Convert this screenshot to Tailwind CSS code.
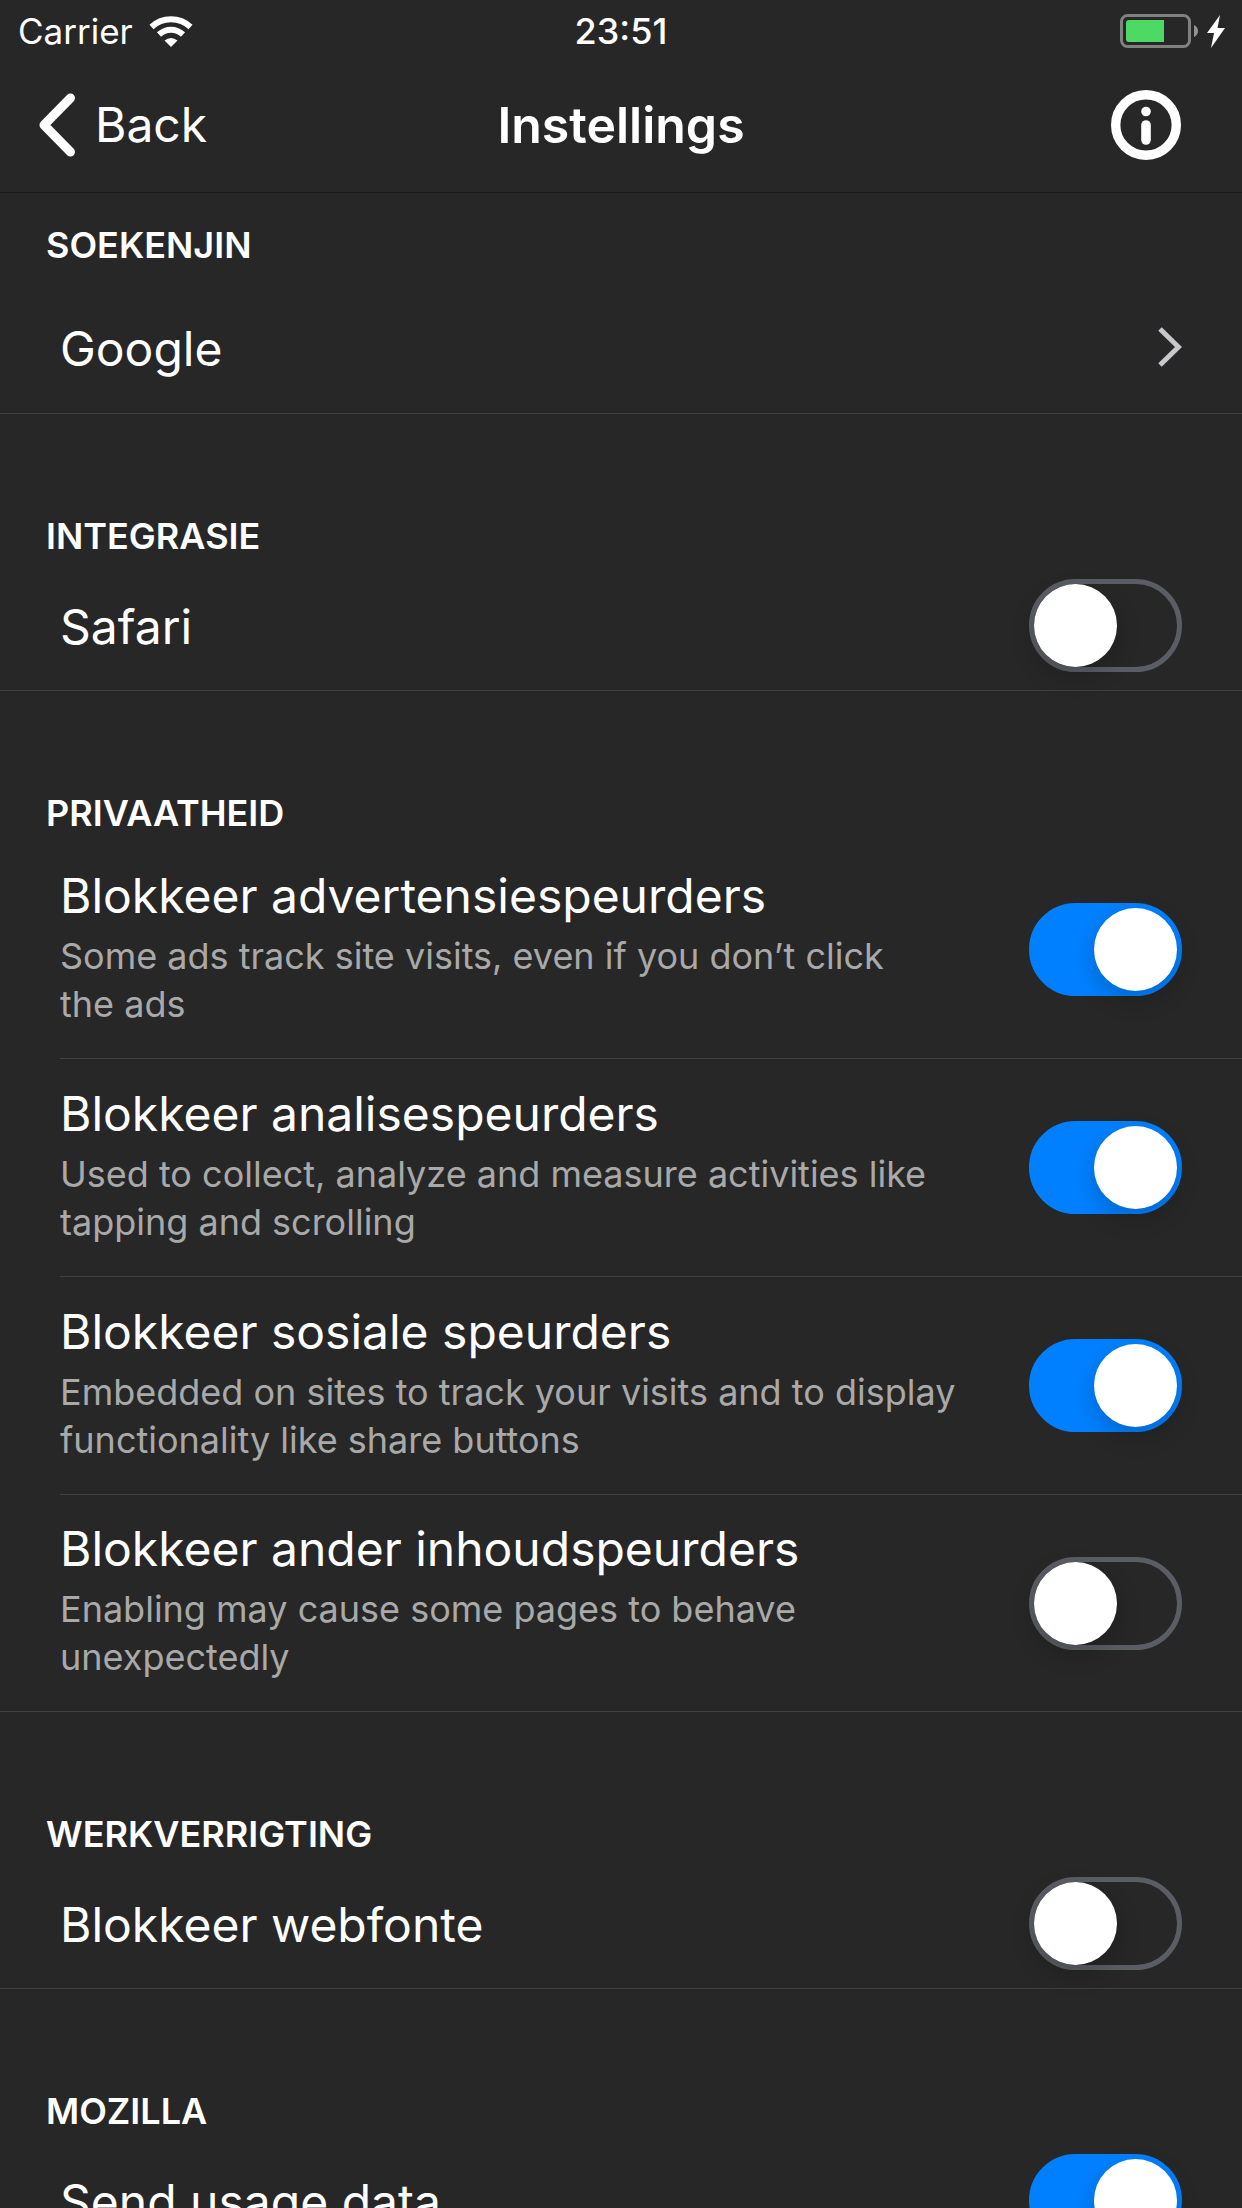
<!DOCTYPE html>
<html lang="af">
<head>
<meta charset="utf-8">
<meta name="viewport" content="width=device-width, initial-scale=1">
<title>Instellings</title>
<script src="https://cdn.jsdelivr.net/npm/@tailwindcss/browser@4"></script>
</head>
<body class="flex h-screen flex-col overflow-hidden bg-[#272727] font-['Inter',sans-serif] text-white">
<div class="grid h-[62px] shrink-0 grid-cols-[1fr_auto_1fr] items-center px-4 text-[36px] leading-[60px]">
  <div class="flex items-center gap-4 pl-0.5">
    <span class="text-[35px]">Carrier</span>
    <svg class="h-[31px] w-[44px]" viewBox="0 0 44 31" fill="none" stroke="#fff" aria-label="Wi-Fi">
      <path d="M2.500 11C13.500 .8 30.500 .8 41.500 11" stroke-width="6"/>
      <path d="M10 18.500C17 12 27 12 34 18.500" stroke-width="6"/>
      <path d="M22 31L15.500 24.500Q22 19.500 28.500 24.500Z" fill="#fff" stroke="none"/>
    </svg>
  </div>
  <time class="font-medium">23:51</time>
  <svg class="h-[34px] w-[106px] justify-self-end" viewBox="0 0 106 34" aria-label="Battery charging">
    <rect x="1.500" y="1.500" width="68" height="31" rx="6" fill="none" stroke="#808080" stroke-width="3"/>
    <path d="M9 6H44V28H9Q6 28 6 25V9Q6 6 9 6Z" fill="#4cd964"/>
    <path d="M74 11Q78 13 78 17T74 23Z" fill="#939393"/>
    <path d="M100 1L87 19H94L91 34L105 14H97.500Z" fill="#fff"/>
  </svg>
</div>

<header class="grid h-[131px] shrink-0 grid-cols-[1fr_auto_1fr] items-center border-b border-[#191919] px-[38px] pb-1 leading-[60px]">
  <button class="flex items-center gap-5 justify-self-start text-[48px]">
    <svg class="h-[64px] w-[37px]" viewBox="0 0 37 64" fill="none" stroke="#fff" stroke-width="9" stroke-linecap="round" stroke-linejoin="round"><path d="M32.500 5L6 32L32.500 59"/></svg>
    <span>Back</span>
  </button>
  <h1 class="text-[50px] font-semibold">Instellings</h1>
  <button class="mr-[23px] justify-self-end" aria-label="Info">
    <svg class="size-[70px]" viewBox="0 0 70 70"><circle cx="35" cy="35" r="30.300" fill="none" stroke="#fff" stroke-width="9.400"/><circle cx="35" cy="21.500" r="4.800" fill="#fff"/><path d="M35 35V50" stroke="#fff" stroke-width="9.600" stroke-linecap="round"/></svg>
  </button>
</header>

<main class="flex-1 overflow-y-auto text-[48px] leading-[60px] [scrollbar-width:none]">
  <section class="border-b border-[#404040]">
    <h2 class="flex h-20 items-end px-[46px] pb-1 text-[36px] leading-[48px] font-semibold">SOEKENJIN</h2>
    <a href="#" class="flex h-[140px] items-center justify-between px-[60px] pt-3">
      <span>Google</span>
      <svg class="mb-1 h-[40px] w-[24px]" viewBox="0 0 24 40" fill="none" stroke="#c7c7cc" stroke-width="5"><path d="M2 2L20.500 20L2 38"/></svg>
    </a>
  </section>

  <section class="border-b border-[#404040]">
    <h2 class="flex h-[150px] items-end px-[46px] pb-1 text-[36px] leading-[48px] font-semibold">INTEGRASIE</h2>
    <div class="flex h-[126px] items-center justify-between px-[60px]">
      <label for="safari">Safari</label>
      <input id="safari" type="checkbox" role="switch" class="mb-1 h-[93px] w-[153px] shrink-0 appearance-none rounded-full border-[5px] border-[#5a5e64] before:block before:size-[83px] before:rounded-full before:bg-white before:shadow-[0_9px_24px_rgba(0,0,0,0.2)] checked:border-[#0080ff] checked:bg-[#0080ff] checked:before:ml-[60px]">
    </div>
  </section>

  <section class="border-b border-[#404040]">
    <h2 class="flex h-[150px] items-end px-[46px] pb-1 text-[36px] leading-[48px] font-semibold">PRIVAATHEID</h2>
    <div class="ml-[60px] flex h-[218px] items-center justify-between border-b border-[#404040] pr-[60px]">
      <div class="flex flex-col gap-1.5 pb-1.5">
        <label for="ads">Blokkeer advertensiespeurders</label>
        <p class="text-[36px] leading-[48px] text-[#a9a9a9]">Some ads track site visits, even if you don’t click<br>the ads</p>
      </div>
      <input id="ads" type="checkbox" role="switch" checked class="h-[93px] w-[153px] shrink-0 appearance-none rounded-full border-[5px] border-[#5a5e64] before:block before:size-[83px] before:rounded-full before:bg-white before:shadow-[0_9px_24px_rgba(0,0,0,0.2)] checked:border-[#0080ff] checked:bg-[#0080ff] checked:before:ml-[60px]">
    </div>
    <div class="ml-[60px] flex h-[218px] items-center justify-between border-b border-[#404040] pr-[60px]">
      <div class="flex flex-col gap-1.5 pb-1.5">
        <label for="analytics">Blokkeer analisespeurders</label>
        <p class="text-[36px] leading-[48px] text-[#a9a9a9]">Used to collect, analyze and measure activities like<br>tapping and scrolling</p>
      </div>
      <input id="analytics" type="checkbox" role="switch" checked class="h-[93px] w-[153px] shrink-0 appearance-none rounded-full border-[5px] border-[#5a5e64] before:block before:size-[83px] before:rounded-full before:bg-white before:shadow-[0_9px_24px_rgba(0,0,0,0.2)] checked:border-[#0080ff] checked:bg-[#0080ff] checked:before:ml-[60px]">
    </div>
    <div class="ml-[60px] flex h-[218px] items-center justify-between border-b border-[#404040] pr-[60px]">
      <div class="flex flex-col gap-1.5 pb-1.5">
        <label for="social">Blokkeer sosiale speurders</label>
        <p class="text-[36px] leading-[48px] text-[#a9a9a9]">Embedded on sites to track your visits and to display<br>functionality like share buttons</p>
      </div>
      <input id="social" type="checkbox" role="switch" checked class="h-[93px] w-[153px] shrink-0 appearance-none rounded-full border-[5px] border-[#5a5e64] before:block before:size-[83px] before:rounded-full before:bg-white before:shadow-[0_9px_24px_rgba(0,0,0,0.2)] checked:border-[#0080ff] checked:bg-[#0080ff] checked:before:ml-[60px]">
    </div>
    <div class="ml-[60px] flex h-[216px] items-center justify-between pr-[60px]">
      <div class="flex flex-col gap-1.5 pb-1.5">
        <label for="content">Blokkeer ander inhoudspeurders</label>
        <p class="text-[36px] leading-[48px] text-[#a9a9a9]">Enabling may cause some pages to behave<br>unexpectedly</p>
      </div>
      <input id="content" type="checkbox" role="switch" class="h-[93px] w-[153px] shrink-0 appearance-none rounded-full border-[5px] border-[#5a5e64] before:block before:size-[83px] before:rounded-full before:bg-white before:shadow-[0_9px_24px_rgba(0,0,0,0.2)] checked:border-[#0080ff] checked:bg-[#0080ff] checked:before:ml-[60px]">
    </div>
  </section>

  <section class="border-b border-[#404040]">
    <h2 class="flex h-[150px] items-end px-[46px] pb-1 text-[36px] leading-[48px] font-semibold">WERKVERRIGTING</h2>
    <div class="flex h-[126px] items-center justify-between px-[60px]">
      <label for="fonts">Blokkeer webfonte</label>
      <input id="fonts" type="checkbox" role="switch" class="mb-1 h-[93px] w-[153px] shrink-0 appearance-none rounded-full border-[5px] border-[#5a5e64] before:block before:size-[83px] before:rounded-full before:bg-white before:shadow-[0_9px_24px_rgba(0,0,0,0.2)] checked:border-[#0080ff] checked:bg-[#0080ff] checked:before:ml-[60px]">
    </div>
  </section>

  <section class="border-b border-[#404040]">
    <h2 class="flex h-[150px] items-end px-[46px] pb-1 text-[36px] leading-[48px] font-semibold">MOZILLA</h2>
    <div class="flex h-[126px] items-center justify-between px-[60px]">
      <label for="usage">Send usage data</label>
      <input id="usage" type="checkbox" role="switch" checked class="mb-1 h-[93px] w-[153px] shrink-0 appearance-none rounded-full border-[5px] border-[#5a5e64] before:block before:size-[83px] before:rounded-full before:bg-white before:shadow-[0_9px_24px_rgba(0,0,0,0.2)] checked:border-[#0080ff] checked:bg-[#0080ff] checked:before:ml-[60px]">
    </div>
  </section>
</main>
</body>
</html>
